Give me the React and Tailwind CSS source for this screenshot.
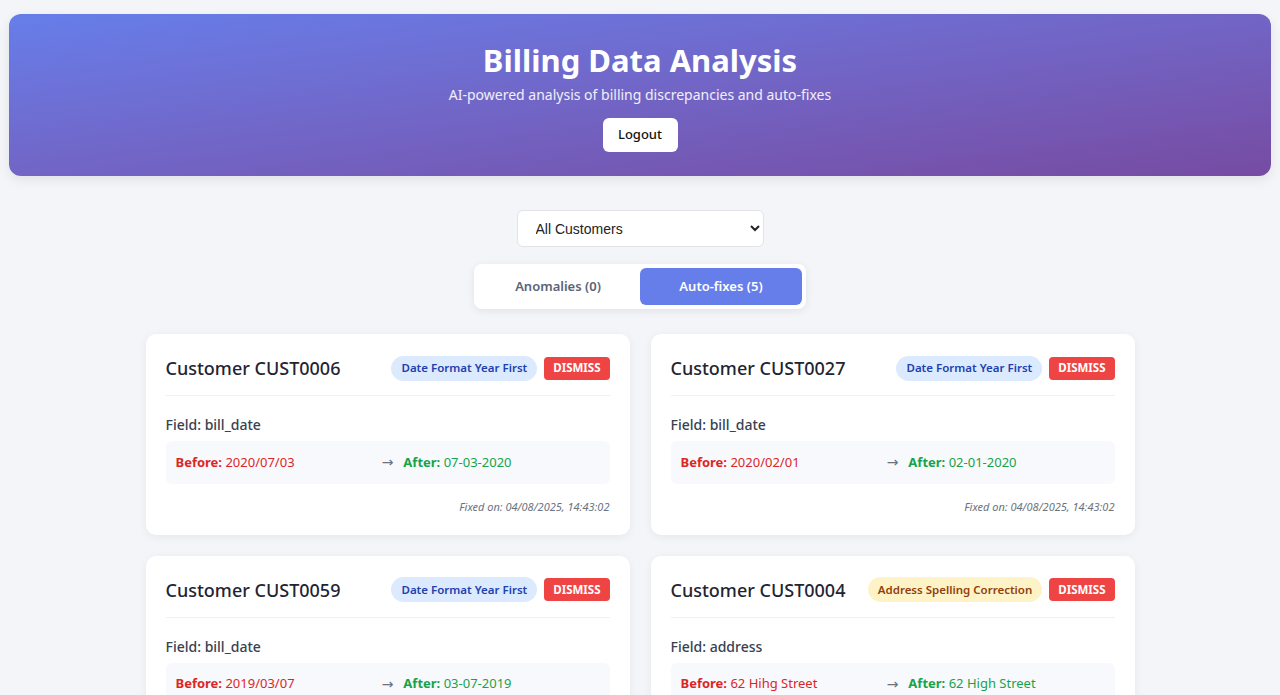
import { useState } from 'react';

const fixes = [
	{
		id: 'CUST0006',
		type: 'Date Format Year First',
		tone: 'blue',
		field: 'bill_date',
		before: '2020/07/03',
		after: '07-03-2020',
		fixedOn: '04/08/2025, 14:43:02',
	},
	{
		id: 'CUST0027',
		type: 'Date Format Year First',
		tone: 'blue',
		field: 'bill_date',
		before: '2020/02/01',
		after: '02-01-2020',
		fixedOn: '04/08/2025, 14:43:02',
	},
	{
		id: 'CUST0059',
		type: 'Date Format Year First',
		tone: 'blue',
		field: 'bill_date',
		before: '2019/03/07',
		after: '03-07-2019',
		fixedOn: '04/08/2025, 14:43:02',
	},
	{
		id: 'CUST0004',
		type: 'Address Spelling Correction',
		tone: 'yellow',
		field: 'address',
		before: '62 Hihg Street',
		after: '62 High Street',
		fixedOn: '04/08/2025, 14:43:02',
	},
	{
		id: 'CUST0041',
		type: 'Address Spelling Correction',
		tone: 'yellow',
		field: 'address',
		before: '18 Mian Road',
		after: '18 Main Road',
		fixedOn: '04/08/2025, 14:43:02',
	},
];

function FixCard({ fix }) {
	const badge =
		fix.tone === 'yellow'
			? 'bg-[#fef3c7] text-[#92400e]'
			: 'bg-[#dbeafe] text-[#1e40af]';
	return (
		<div className="bg-white rounded-[10px] shadow-[0_2px_10px_rgba(0,0,0,0.06)] px-5 pt-5 pb-[19px]">
			<div className="flex items-center justify-between pb-[13px] border-b border-[#eef0f3]">
				<h3 className="text-[18px] font-medium text-[#1f2433] leading-[28px] whitespace-nowrap">
					Customer {fix.id}
				</h3>
				<div className="flex items-center gap-[7px]">
					<span className={`px-[10px] h-[25px] flex items-center rounded-full text-[11.5px] font-semibold whitespace-nowrap ${badge}`}>
						{fix.type}
					</span>
					<button className="h-[23px] px-[9px] rounded-[4px] bg-[#ef4444] text-white text-[11.5px] font-bold">
						DISMISS
					</button>
				</div>
			</div>
			<div className="mt-[18px] text-[14px] font-medium text-[#374151] leading-[22px]">
				Field: {fix.field}
			</div>
			<div className="mt-[5px] bg-[#f8f9fc] rounded-md h-[43px] px-[10px] grid grid-cols-[1fr_auto_1fr] gap-[10px] items-center text-[13px]">
				<div className="text-[#dc2626]">
					<span className="font-bold">Before:</span> {fix.before}
				</div>
				<div
					className="text-[#6b7280] text-[14px]"
					style={{ fontFamily: '"DejaVu Sans", sans-serif' }}
				>
					→
				</div>
				<div className="text-[#16a34a]">
					<span className="font-bold">After:</span> {fix.after}
				</div>
			</div>
			<div className="mt-[15px] text-right text-[11px] italic text-[#6b7280]">
				Fixed on: {fix.fixedOn}
			</div>
		</div>
	);
}

export default function App() {
	const [tab, setTab] = useState('fixes');

	return (
		<div
			className="min-h-screen bg-[#f4f5f9] pt-[14px] pb-10 px-[9px]"
			style={{ fontFamily: '"Segoe UI", "Noto Sans", "Open Sans", sans-serif' }}
		>
			<header className="rounded-[12px] bg-gradient-to-br from-[#667eea] to-[#764ba2] text-white text-center pt-[27px] pb-[24px] shadow-[0_4px_12px_rgba(0,0,0,0.08)]">
				<h1 className="text-[31px] font-bold leading-[38px]">Billing Data Analysis</h1>
				<p className="mt-[5px] text-[14px] leading-[22px] text-white/90">
					AI-powered analysis of billing discrepancies and auto-fixes
				</p>
				<button className="mt-[12px] h-[34px] w-[75px] bg-white text-[#111] rounded-md text-[13px] font-medium">
					Logout
				</button>
			</header>

			<div className="flex justify-center mt-[34px]">
				<select
					className="w-[247px] h-[37px] pl-[14px] pr-2 bg-white border border-[#e2e4ea] rounded-md text-[14px] text-[#222]"
					style={{ fontFamily: '"Liberation Sans", Arial, sans-serif' }}
				>
					<option>All Customers</option>
				</select>
			</div>

			<div className="flex justify-center mt-[17px]">
				<div className="flex gap-[2px] p-[4px] bg-white rounded-lg shadow-[0_2px_8px_rgba(0,0,0,0.08)]">
					<button
						onClick={() => setTab('anomalies')}
						className={`w-[160px] h-[37px] rounded-md text-[13px] font-semibold ${tab === 'anomalies' ? 'bg-[#667eea] text-white' : 'text-[#5b6474]'}`}
					>
						Anomalies (0)
					</button>
					<button
						onClick={() => setTab('fixes')}
						className={`w-[162px] h-[37px] rounded-md text-[13px] font-semibold ${tab === 'fixes' ? 'bg-[#667eea] text-white' : 'text-[#5b6474]'}`}
					>
						Auto-fixes (5)
					</button>
				</div>
			</div>

			<div className="max-w-[989px] mx-auto mt-[25px] grid grid-cols-2 gap-[21px]">
				{fixes.map((f) => (
					<FixCard key={f.id} fix={f} />
				))}
			</div>
		</div>
	);
}
